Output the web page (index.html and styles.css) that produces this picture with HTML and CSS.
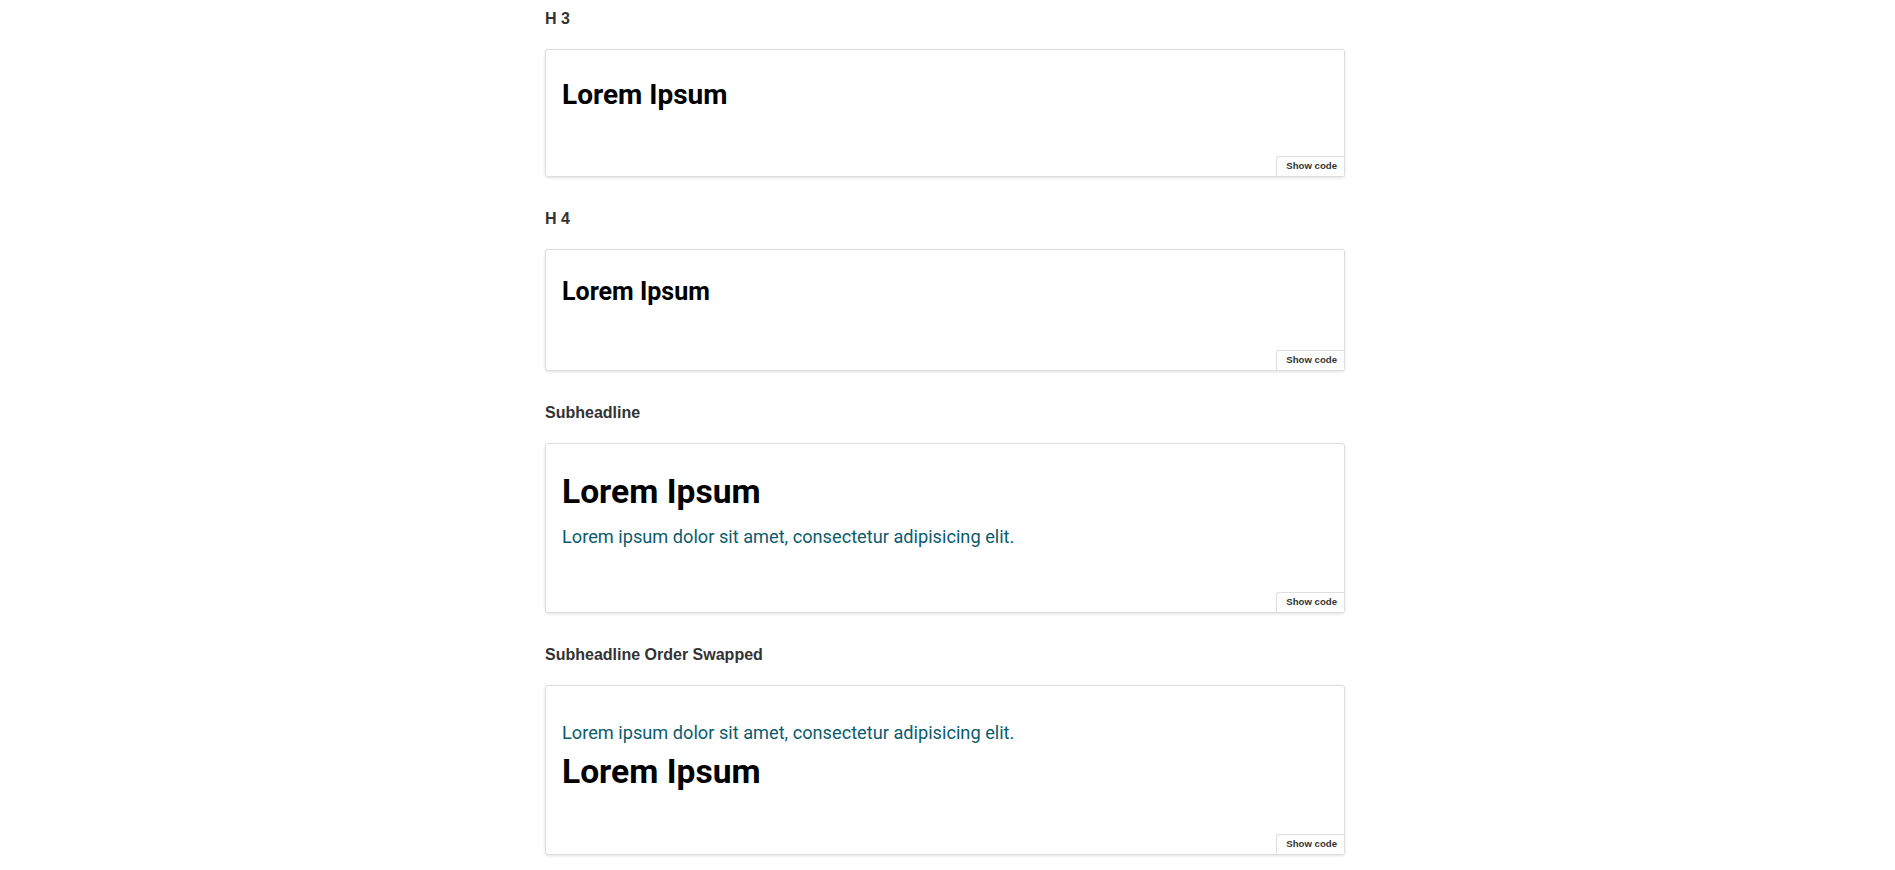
FILE: index.html
```html
<!DOCTYPE html>
<html lang="en">
<head>
<meta charset="utf-8">
<title>Headlines</title>
<link rel="stylesheet" href="styles.css">
</head>
<body>
<main class="page">
  <section class="example">
    <h2 class="label">H 3</h2>
    <div class="card">
      <div class="preview">
        <h3 class="h3">Lorem Ipsum</h3>
      </div>
      <div class="card-foot"><button class="show-code">Show code</button></div>
    </div>
  </section>

  <section class="example">
    <h2 class="label">H 4</h2>
    <div class="card">
      <div class="preview">
        <h4 class="h4">Lorem Ipsum</h4>
      </div>
      <div class="card-foot"><button class="show-code">Show code</button></div>
    </div>
  </section>

  <section class="example">
    <h2 class="label">Subheadline</h2>
    <div class="card">
      <div class="preview">
        <hgroup class="headline-group">
          <h2 class="h2">Lorem Ipsum</h2>
          <p class="subheadline">Lorem ipsum dolor sit amet, consectetur adipisicing elit.</p>
        </hgroup>
      </div>
      <div class="card-foot"><button class="show-code">Show code</button></div>
    </div>
  </section>

  <section class="example">
    <h2 class="label">Subheadline Order Swapped</h2>
    <div class="card">
      <div class="preview">
        <hgroup class="headline-group">
          <p class="subheadline">Lorem ipsum dolor sit amet, consectetur adipisicing elit.</p>
          <h2 class="h2">Lorem Ipsum</h2>
        </hgroup>
      </div>
      <div class="card-foot"><button class="show-code">Show code</button></div>
    </div>
  </section>
</main>
</body>
</html>
```

FILE: styles.css
```css
* { box-sizing: border-box; }

html, body {
  margin: 0;
  padding: 0;
  background: #fff;
}

body {
  font-family: "Liberation Sans", Arial, sans-serif;
  color: #333;
}

.page {
  width: 805px;
  margin: 0 auto;
  padding: 0 5px 0 0;
}

.example {
  display: flex;
  flex-direction: column;
}

.label {
  margin: 0;
  padding-top: 10px;
  font-size: 16px;
  line-height: 17px;
  font-weight: 700;
  color: #333;
}

.card {
  margin-top: 22px;
  margin-bottom: 23px;
  border: 1px solid #dedede;
  border-radius: 3px;
  box-shadow: 0 1px 3px rgba(0, 0, 0, 0.12);
  background: #fff;
  display: flex;
  flex-direction: column;
}

.preview {
  padding: 28px 16px 36px;
  font-family: Roboto, "Noto Sans", sans-serif;
  color: #000;
}

.h3, .h4, .h2 {
  margin: 0;
  font-weight: 700;
  color: #000;
}

.h3 { font-size: 28px; line-height: 1.2; margin-bottom: 8px; }
.h4 { font-size: 25px; line-height: 28px; margin-bottom: 8px; }
.h2 { font-size: 33.6px; line-height: 40px; margin-bottom: 6px; }

.headline-group {
  margin: 0;
  display: flex;
  flex-direction: column;
}

.subheadline {
  margin: 8px 0;
  font-size: 18.2px;
  font-weight: 400;
  line-height: 22px;
  color: #0c5b6d;
}

.card-foot {
  display: flex;
  justify-content: flex-end;
}

.show-code {
  font-family: "Liberation Sans", Arial, sans-serif;
  font-size: 9.6px;
  font-weight: 700;
  line-height: 11px;
  color: #333;
  background: #fff;
  border: 1px solid #dedede;
  border-right: 0;
  border-bottom: 0;
  border-radius: 3px 0 0 0;
  padding: 3px 7px 5px 9px;
  cursor: pointer;
}
```
